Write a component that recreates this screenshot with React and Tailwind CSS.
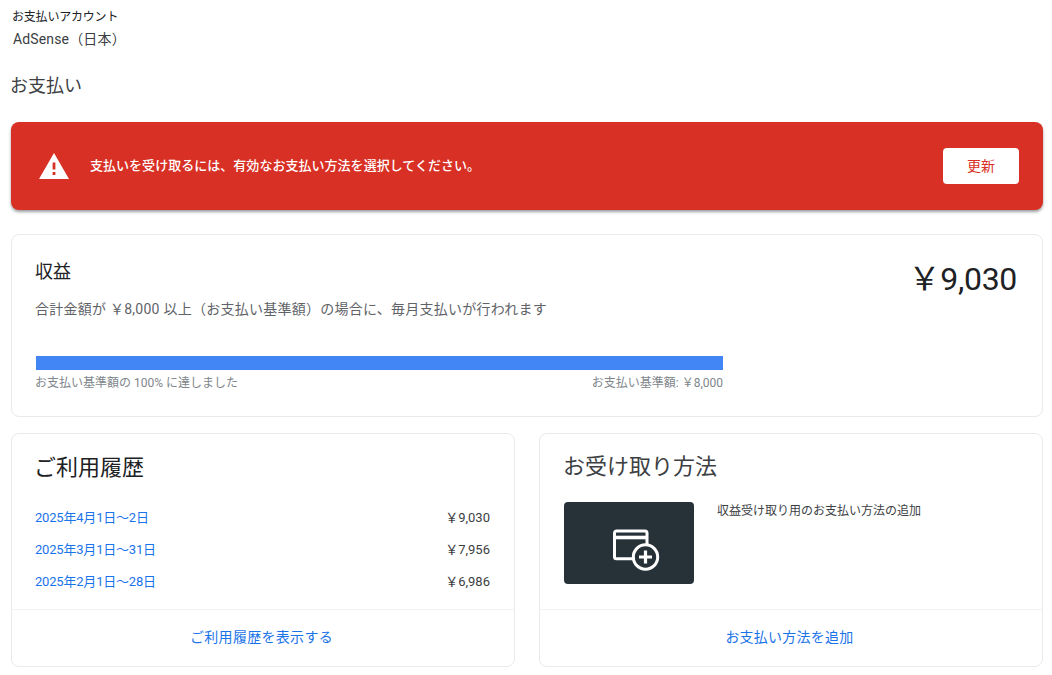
import React from 'react';

const FONT = "font-['Roboto','Noto_Sans_CJK_JP',sans-serif]";

const history = [
    { period: '2025年4月1日～2日', amount: '￥9,030' },
    { period: '2025年3月1日～31日', amount: '￥7,956' },
    { period: '2025年2月1日～28日', amount: '￥6,986' },
];

const WarningIcon = () => (
    <svg width="32" height="28" viewBox="0 0 32 28" className="shrink-0 -ml-px">
        <path fillRule="evenodd" fill="#fff" d="M16 1 L31 27 H1 Z M14.6 10.5 V17.5 H17.4 V10.5 Z M14.6 20 V23 H17.4 V20 Z" />
    </svg>
);

const CardAddIcon = () => (
    <svg width="48" height="46" viewBox="0 0 48 46" fill="none" stroke="#fff" strokeWidth="3">
        <path d="M22 29.7 H3.5 a2 2 0 0 1 -2 -2 V4 a2 2 0 0 1 2 -2 H32 a2 2 0 0 1 2 2 V16" />
        <path d="M2 8.5 H34" strokeWidth="3.6" />
        <circle cx="32.5" cy="28" r="12.2" />
        <path d="M32.5 21.5 V34.5 M26 28 H39" strokeWidth="3.2" />
    </svg>
);

const App = () => {
    return (
        <div className={`${FONT} w-[1052px] h-[675px] overflow-hidden bg-white pl-[11px] pr-[9px] text-[#202124]`}>
            {/* Account */}
            <div className="pt-[9px] pl-[2px]">
                <p className="-ml-px text-[12px] leading-[16px] tracking-[-0.2px]">お支払いアカウント</p>
                <p className="mt-[4px] text-[14px] leading-[20px] tracking-[0.15px] text-[#3c4043]">AdSense（日本）</p>
            </div>
            <h1 className="mt-[23px] -ml-px text-[18px] leading-[28px] text-[#3c4043]">お支払い</h1>

            {/* Alert */}
            <div className="mt-[22px] h-[88px] flex items-center rounded-[8px] bg-[#d93025] pl-[28px] pr-[24px] shadow-[0_2px_3px_rgba(60,64,67,0.5)]">
                <WarningIcon />
                <p className="ml-[20px] flex-1 text-[13px] font-medium tracking-[0.03px] text-white">支払いを受け取るには、有効なお支払い方法を選択してください。</p>
                <button className="h-[36px] w-[76px] rounded-[4px] bg-white text-[14px] text-[#d93025]">更新</button>
            </div>

            {/* Earnings */}
            <div className="mt-[24px] h-[183px] rounded-[8px] border border-[#e8eaed] pl-[24px] pr-[25px] pt-[25px]">
                <div className="flex justify-between">
                    <div>
                        <h2 className="-ml-px -mt-px text-[18px] leading-[26px]">収益</h2>
                        <p className="mt-[13px] -ml-px text-[14px] leading-[22px] tracking-[0.25px] text-[#5f6368]">合計金額が ￥8,000 以上（お支払い基準額）の場合に、毎月支払いが行われます</p>
                    </div>
                    <p className="-mt-px text-[32px] leading-[40px] tracking-[-0.3px] text-[#202124]">￥9,030</p>
                </div>
                <div className="mt-[36px] w-[687px]">
                    <div className="h-[14px] bg-[#4285f4]"></div>
                    <div className="mt-[5px] flex justify-between text-[12px] leading-[16px] text-[#80868b]">
                        <span className="-ml-px">お支払い基準額の 100% に達しました</span>
                        <span>お支払い基準額: ￥8,000</span>
                    </div>
                </div>
            </div>

            {/* Bottom cards */}
            <div className="mt-[16px] grid grid-cols-2 gap-[24px]">
                <div className="h-[234px] flex flex-col rounded-[8px] border border-[#e8eaed]">
                    <div className="flex-1 pl-[23px] pr-[24px] pt-[18px]">
                        <h2 className="-ml-px text-[22px] leading-[32px]">ご利用履歴</h2>
                        <div className="mt-[18px]">
                            {history.map((row) => (
                                <div key={row.period} className="h-[32px] flex items-center justify-between text-[13px]">
                                    <a className="tracking-[-0.2px] text-[#1a73e8]">{row.period}</a>
                                    <span className="text-[#3c4043]">{row.amount}</span>
                                </div>
                            ))}
                        </div>
                    </div>
                    <div className="h-[57px] flex items-center justify-center border-t border-[#f1f3f4] pb-[2px] pr-[3px] text-[14px] tracking-[0.3px] text-[#1a73e8]">ご利用履歴を表示する</div>
                </div>

                <div className="h-[234px] flex flex-col rounded-[8px] border border-[#e8eaed]">
                    <div className="flex-1 pl-[24px] pr-[23px] pt-[17px]">
                        <h2 className="-ml-px text-[22px] leading-[32px] text-[#3c4043]">お受け取り方法</h2>
                        <div className="mt-[19px] flex items-start">
                            <div className="h-[82px] w-[130px] flex items-center justify-center rounded-[4px] bg-[#263238] pt-[18px] pl-[15px]">
                                <CardAddIcon />
                            </div>
                            <p className="ml-[23px] mt-px text-[12px] leading-[16px] text-[#3c4043]">収益受け取り用のお支払い方法の追加</p>
                        </div>
                    </div>
                    <div className="h-[57px] flex items-center justify-center border-t border-[#f1f3f4] pb-[2px] pr-[3px] text-[14px] tracking-[0.25px] text-[#1a73e8]">お支払い方法を追加</div>
                </div>
            </div>
        </div>
    );
};

export default App;
